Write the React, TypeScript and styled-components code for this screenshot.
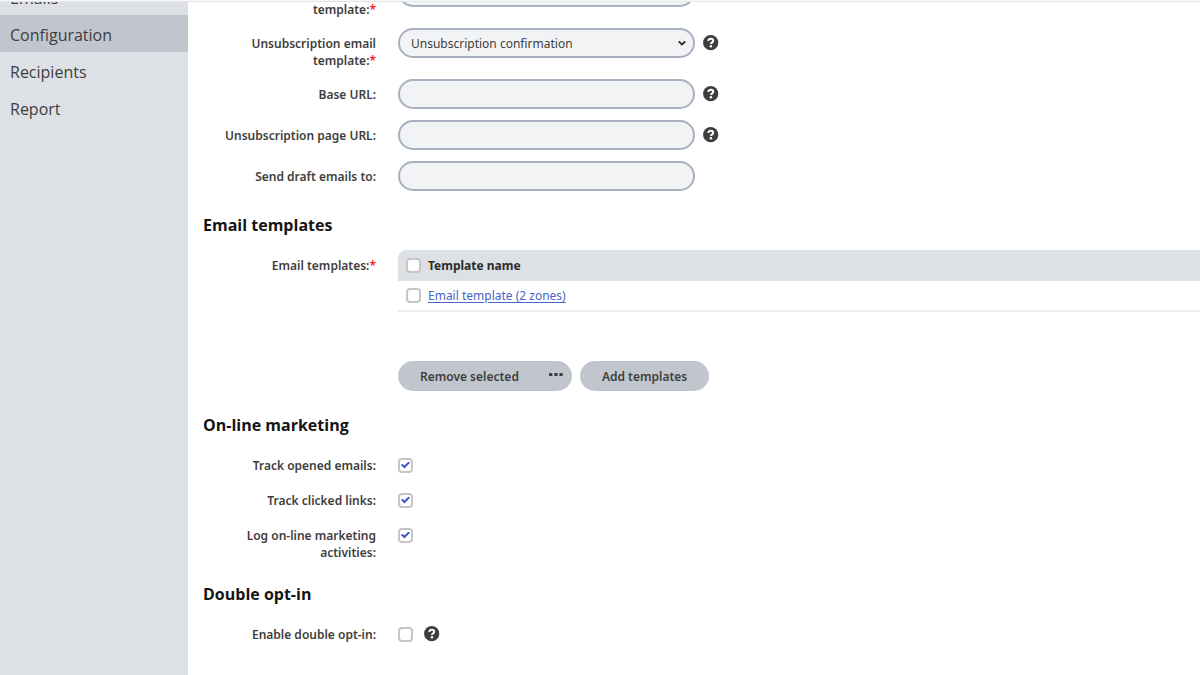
import React, { useId, useState } from "react";
import styled, { createGlobalStyle, css } from "styled-components";

const GlobalStyle = createGlobalStyle`
  *, *::before, *::after { box-sizing: border-box; }
  body {
    margin: 0;
    background: #ffffff;
    color: #403e3d;
    font-family: "Noto Sans", "Open Sans", sans-serif;
    font-size: 12px;
    line-height: 17px;
  }
  button, input, select { font: inherit; color: inherit; }
`;

const Shell = styled.div`
  display: flex;
  flex-direction: column;
  min-height: 100vh;
`;

const TopEdge = styled.header`
  height: 2px;
  background: #e4e6e8;
  border-top: 1px solid #f7f7f8;
`;

const Body = styled.div`
  display: flex;
  flex: 1;
  overflow: hidden;
`;

const Sidebar = styled.nav`
  width: 188px;
  flex: none;
  background: #dde0e4;
`;

const NavList = styled.ul`
  list-style: none;
  margin: -24px 0 0;
  padding: 0;
`;

const NavLink = styled.a<{ $active?: boolean }>`
  display: block;
  padding: 9px 10px 6px;
  font-family: "Open Sans", "Noto Sans", sans-serif;
  font-size: 16px;
  line-height: 22px;
  color: #403e3d;
  text-decoration: none;
  background: ${(p) => (p.$active ? "#c1c6ce" : "transparent")};
`;

const Main = styled.main`
  flex: 1;
  min-width: 0;
  padding: 0 0 29px 15px;
`;

const Form = styled.form`
  margin-top: -25px;
  display: flex;
  flex-direction: column;
  gap: 21px;
`;

const Group = styled.section`
  display: flex;
  flex-direction: column;
  gap: 10px;
`;

const GroupTitle = styled.h2`
  margin: 0 0 3px;
  font-family: "Open Sans", "Noto Sans", sans-serif;
  font-size: 16px;
  line-height: 24px;
  font-weight: 700;
  color: #151515;
`;

const Row = styled.div`
  display: grid;
  grid-template-columns: 173px minmax(0, 1fr);
  column-gap: 22px;
  align-items: start;
`;

const labelText = css`
  padding: 7px 0 0 16px;
  text-align: right;
  font-weight: 600;
`;

const Label = styled.label`
  ${labelText}
`;

const LabelText = styled.span`
  ${labelText}
`;

const Required = styled.span`
  color: #ff1a1a;
`;

const Control = styled.div`
  display: flex;
  align-items: start;
  gap: 8px;
  height: 31px;
  & > button { margin-top: 7px; }
`;

const CheckControl = styled.div`
  display: flex;
  align-items: center;
  gap: 11px;
  height: 25px;
  padding-top: 5px;
`;

const field = css`
  width: 297px;
  height: 30px;
  border: 2px solid #a9b0bf;
  border-radius: 15px;
  background: #f2f3f5;
`;

const TextInput = styled.input`
  ${field}
  padding: 0 12px;
`;

const SelectBox = styled.span`
  display: inline-grid;
  align-items: center;
  & > * { grid-area: 1 / 1; }
  & > svg { justify-self: end; margin-right: 8px; pointer-events: none; }
`;

const Select = styled.select`
  ${field}
  appearance: none;
  padding: 1px 28px 0 11px;
`;

const Checkbox = styled.input.attrs({ type: "checkbox" })`
  appearance: none;
  display: grid;
  flex: none;
  width: 15px;
  height: 15px;
  margin: 0;
  border: 2px solid #c6c6c6;
  border-radius: 4px;
  background: #ffffff;
  place-content: center;

  &:checked::before {
    content: "";
    width: 9px;
    height: 7px;
    background: #3a56c5;
    clip-path: polygon(0 50%, 16% 32%, 38% 58%, 84% 0, 100% 18%, 38% 100%);
  }
`;

const HelpButton = styled.button`
  display: flex;
  padding: 0;
  border: 0;
  background: none;
`;

const Stack = styled.div`
  display: flex;
  flex-direction: column;
  gap: 49px;
`;

const Table = styled.table`
  width: 100%;
  border-collapse: separate;
  border-spacing: 0;
  text-align: left;
`;

const HeadCell = styled.th`
  height: 31px;
  padding: 0;
  background: #dde0e4;
  font-weight: 700;
  color: #2c2b2a;
  &:first-child { width: 30px; padding-left: 8px; border-top-left-radius: 8px; }
`;

const Cell = styled.td`
  height: 31px;
  padding: 0;
  border-bottom: 2px solid #ececec;
  &:first-child { padding-left: 8px; }
`;

const TemplateLink = styled.a`
  color: #4a64c8;
  text-decoration: underline;
  text-underline-offset: 2px;
`;

const Actions = styled.div`
  display: flex;
  gap: 8px;
  padding-bottom: 1px;
`;

const SplitButton = styled.div`
  display: flex;
`;

const Button = styled.button<{ $part?: "start" | "end" }>`
  display: flex;
  align-items: center;
  justify-content: center;
  height: 30px;
  padding: 0 22px;
  border: 0;
  background: #c1c6ce;
  font-weight: 600;
  border-radius: ${(p) =>
    p.$part === "start" ? "15px 0 0 15px" : p.$part === "end" ? "0 15px 15px 0" : "15px"};
  ${(p) => p.$part === "end" && "width: 31px; padding: 0;"}
`;

function Help({ topic }: { topic: string }) {
  return (
    <HelpButton type="button" aria-label={`Help: ${topic}`}>
      <svg width="16" height="16" viewBox="0 0 16 16" aria-hidden="true">
        <circle cx="7.7" cy="7.7" r="7.6" fill="#403e3d" />
        <path
          d="M5.4 6.1C5.4 4.5 6.4 3.8 7.8 3.8s2.4.8 2.4 2c0 1.6-2.2 1.6-2.2 3.3"
          fill="none"
          stroke="#fff"
          strokeWidth="2"
        />
        <circle cx="7.9" cy="11.3" r="1.25" fill="#fff" />
      </svg>
    </HelpButton>
  );
}

function Star() {
  return <Required>*</Required>;
}

function SelectRow({ label, option }: { label: string; option: string }) {
  const id = useId();
  return (
    <Row>
      <Label htmlFor={id}>
        {label}:<Star />
      </Label>
      <Control>
        <SelectBox>
          <Select id={id}>
            <option>{option}</option>
          </Select>
          <svg width="10" height="10" viewBox="0 0 10 10" aria-hidden="true">
            <path d="M1.8 3.4 5 6.6l3.2-3.2" fill="none" stroke="#222" strokeWidth="1.8" />
          </svg>
        </SelectBox>
        <Help topic={label} />
      </Control>
    </Row>
  );
}

function TextRow({ label, help }: { label: string; help?: boolean }) {
  const id = useId();
  return (
    <Row>
      <Label htmlFor={id}>{label}:</Label>
      <Control>
        <TextInput id={id} type="text" />
        {help && <Help topic={label} />}
      </Control>
    </Row>
  );
}

function CheckRow({ label, on, help }: { label: string; on?: boolean; help?: boolean }) {
  const id = useId();
  const [checked, setChecked] = useState(!!on);
  return (
    <Row>
      <Label htmlFor={id}>{label}:</Label>
      <CheckControl>
        <Checkbox id={id} checked={checked} onChange={(e) => setChecked(e.target.checked)} />
        {help && <Help topic={label} />}
      </CheckControl>
    </Row>
  );
}

const pages = ["Emails", "Configuration", "Recipients", "Report"];

export default function App() {
  return (
    <>
      <GlobalStyle />
      <Shell>
        <TopEdge />
        <Body>
          <Sidebar>
            <NavList>
              {pages.map((page) => (
                <li key={page}>
                  <NavLink href="#" $active={page === "Configuration"}>
                    {page}
                  </NavLink>
                </li>
              ))}
            </NavList>
          </Sidebar>
          <Main>
            <Form>
              <Group>
                <SelectRow label="Subscription email template" option="Subscription confirmation" />
                <SelectRow label="Unsubscription email template" option="Unsubscription confirmation" />
                <TextRow label="Base URL" help />
                <TextRow label="Unsubscription page URL" help />
                <TextRow label="Send draft emails to" />
              </Group>

              <Group>
                <GroupTitle>Email templates</GroupTitle>
                <Row>
                  <LabelText id="templates-label">
                    Email templates:
                    <Star />
                  </LabelText>
                  <Stack>
                    <Table aria-labelledby="templates-label">
                      <thead>
                        <tr>
                          <HeadCell>
                            <Checkbox aria-label="Select all templates" />
                          </HeadCell>
                          <HeadCell>Template name</HeadCell>
                        </tr>
                      </thead>
                      <tbody>
                        <tr>
                          <Cell>
                            <Checkbox aria-label="Select Email template (2 zones)" />
                          </Cell>
                          <Cell>
                            <TemplateLink href="#">Email template (2 zones)</TemplateLink>
                          </Cell>
                        </tr>
                      </tbody>
                    </Table>
                    <Actions>
                      <SplitButton>
                        <Button type="button" $part="start">
                          Remove selected
                        </Button>
                        <Button type="button" $part="end" aria-label="More actions">
                          <svg width="16" height="8" viewBox="0 0 16 8" aria-hidden="true">
                            <g fill="#403e3d">
                              <rect x="1" y="1" width="3.4" height="3" rx="0.6" />
                              <rect x="6.2" y="1" width="3.4" height="3" rx="0.6" />
                              <rect x="11.4" y="1" width="3.4" height="3" rx="0.6" />
                            </g>
                          </svg>
                        </Button>
                      </SplitButton>
                      <Button type="button">Add templates</Button>
                    </Actions>
                  </Stack>
                </Row>
              </Group>

              <Group>
                <GroupTitle>On-line marketing</GroupTitle>
                <CheckRow label="Track opened emails" on />
                <CheckRow label="Track clicked links" on />
                <CheckRow label="Log on-line marketing activities" on />
              </Group>

              <Group>
                <GroupTitle>Double opt-in</GroupTitle>
                <CheckRow label="Enable double opt-in" help />
              </Group>
            </Form>
          </Main>
        </Body>
      </Shell>
    </>
  );
}
